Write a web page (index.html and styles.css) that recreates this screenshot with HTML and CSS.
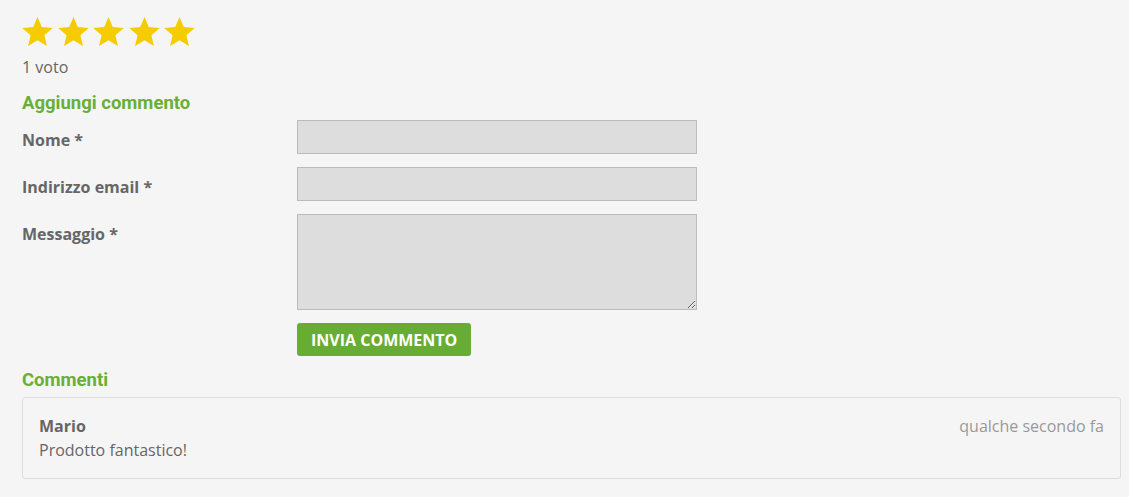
FILE: index.html
```html
<!DOCTYPE html>
<html lang="it">
<head>
  <meta charset="UTF-8" />
  <meta name="viewport" content="width=device-width, initial-scale=1.0"/>
  <title>Commenti</title>
  <link rel="stylesheet" href="styles.css">
</head>
<body>

  <!-- Rating -->
  <div class="rating">
    <svg class="star" viewBox="2 2 20 19"><path d="M12 17.27L18.18 21l-1.64-7.03L22 9.24l-7.19-.61L12 2 9.19 8.63 2 9.24l5.46 4.73L5.82 21z"/></svg>
    <svg class="star" viewBox="2 2 20 19"><path d="M12 17.27L18.18 21l-1.64-7.03L22 9.24l-7.19-.61L12 2 9.19 8.63 2 9.24l5.46 4.73L5.82 21z"/></svg>
    <svg class="star" viewBox="2 2 20 19"><path d="M12 17.27L18.18 21l-1.64-7.03L22 9.24l-7.19-.61L12 2 9.19 8.63 2 9.24l5.46 4.73L5.82 21z"/></svg>
    <svg class="star" viewBox="2 2 20 19"><path d="M12 17.27L18.18 21l-1.64-7.03L22 9.24l-7.19-.61L12 2 9.19 8.63 2 9.24l5.46 4.73L5.82 21z"/></svg>
    <svg class="star" viewBox="2 2 20 19"><path d="M12 17.27L18.18 21l-1.64-7.03L22 9.24l-7.19-.61L12 2 9.19 8.63 2 9.24l5.46 4.73L5.82 21z"/></svg>
  </div>
  <p class="votes">1 voto</p>

  <!-- Add comment -->
  <h3 class="title">Aggiungi commento</h3>
  <form class="comment-form">
    <label for="name">Nome *</label>
    <input type="text" id="name">

    <label for="email">Indirizzo email *</label>
    <input type="email" id="email">

    <label for="message">Messaggio *</label>
    <textarea id="message"></textarea>

    <span></span>
    <div><button type="submit">INVIA COMMENTO</button></div>
  </form>

  <!-- Comments -->
  <h3 class="title title-comments">Commenti</h3>
  <div class="comment">
    <div class="comment-head">
      <span class="author">Mario</span>
      <span class="date">qualche secondo fa</span>
    </div>
    <p class="comment-text">Prodotto fantastico!</p>
  </div>

</body>
</html>
```

FILE: styles.css
```css
body {
  font-family: "Open Sans", Arial, sans-serif;
  font-size: 16px;
  line-height: 22px;
  color: #666;
  background-color: #f5f5f5;
  margin: 0;
  padding: 17px 8px 0 22px;
}

.rating {
  display: flex;
  gap: 4.5px;
  height: 29px;
}

.star {
  width: 31px;
  height: 29px;
  fill: #f5cc00;
}

.votes {
  margin: 10px 0 0;
}

.title {
  font-family: Roboto, Arial, sans-serif;
  font-size: 18.5px;
  line-height: 22px;
  font-weight: bold;
  color: #6aaf35;
  margin: 14px 0 6px;
}

.comment-form {
  display: grid;
  grid-template-columns: 275px 400px;
  row-gap: 13px;
}

.comment-form label {
  font-weight: bold;
  padding-top: 9px;
}

.comment-form input,
.comment-form textarea {
  box-sizing: border-box;
  width: 400px;
  height: 34px;
  margin: 0;
  background: #ddd;
  border: 1px solid #bbb;
  border-radius: 0;
  font-family: inherit;
  font-size: 16px;
  color: #666;
}

.comment-form textarea {
  height: 96px;
  resize: vertical;
}

button {
  height: 33px;
  padding: 0 14px;
  background-color: #68ad33;
  border: none;
  border-radius: 3px;
  color: white;
  font-family: "Open Sans", Arial, sans-serif;
  font-size: 16px;
  font-weight: bold;
  cursor: pointer;
}

.title-comments {
  margin-top: 13px;
}

.comment {
  border: 1px solid #ddd;
  border-radius: 3px;
  padding: 17px 16px 17px 16px;
}

.comment-head {
  display: flex;
  justify-content: space-between;
}

.author {
  font-weight: bold;
}

.date {
  color: #999;
}

.comment-text {
  margin: 2px 0 0;
}
```
